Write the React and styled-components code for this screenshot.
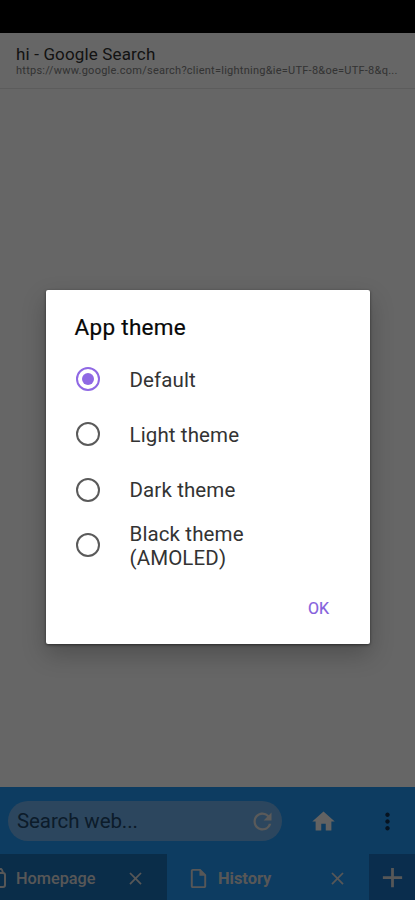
import React, { useState } from 'react'
import styled, { createGlobalStyle } from 'styled-components'
import { MdRefresh, MdHome, MdMoreVert, MdClose, MdAdd, MdOutlineInsertDriveFile } from 'react-icons/md'

const GlobalStyle = createGlobalStyle`
    body {
        margin: 0;
        background: #000;
        font-family: Roboto, sans-serif;
    }
    * {
        box-sizing: border-box;
    }
`
const Screen = styled.div`
    position: relative;
    display: flex;
    flex-direction: column;
    width: 415px;
    height: 900px;
    overflow: hidden;
    background: #fff;
`
const StatusBar = styled.div`
    height: 33px;
    background: #000;
`
const PageHeader = styled.header`
    height: 56px;
    padding: 11px 16px 0;
    border-bottom: 1px solid #e6e6e6;
    white-space: nowrap;
`
const PageTitle = styled.div`
    font-size: 17px;
    line-height: 20px;
    letter-spacing: .15px;
    color: #303030;
`
const PageUrl = styled.div`
    font-size: 11px;
    line-height: 13px;
    letter-spacing: .25px;
    color: #808080;
`
const Page = styled.main`
    flex: 1;
`
const Toolbar = styled.div`
    display: flex;
    align-items: center;
    height: 67px;
    padding: 1px 0 0 8px;
    background: #2196f3;
    color: #f4f4f4;
`
const SearchBox = styled.div`
    display: flex;
    flex: none;
    align-items: center;
    justify-content: space-between;
    width: 274px;
    height: 40px;
    padding: 0 6px 0 9px;
    border-radius: 20px;
    background: #6eb0ea;
    color: #e0e0e0;
`
const Placeholder = styled.span`
    font-size: 20.5px;
    letter-spacing: -.1px;
    color: #20466a;
`
const IconButton = styled.span`
    display: flex;
    flex: none;
    justify-content: center;
    width: ${props => props.width};
    color: ${props => props.color || 'inherit'};
`
const Tabs = styled.div`
    display: flex;
    height: 46px;
    background: #1a70b6;
    color: #dadada;
`
const Tab = styled.div`
    display: flex;
    align-items: center;
    flex: none;
    width: ${props => props.width};
    padding-left: ${props => props.pad || 0};
    padding-top: 2px;
    background: ${props => props.active ? '#2196f3' : '#1a70b6'};
    font-weight: ${props => props.active ? 700 : 500};
    overflow: hidden;
    svg {
        flex: none;
    }
`
const TabLabel = styled.span`
    width: 109px;
    margin-left: ${props => props.left};
    font-size: ${props => props.size};
`
const ClippedIcon = styled.span`
    display: flex;
    justify-content: flex-end;
    width: 7px;
    overflow: hidden;
`
const AddTab = styled.div`
    display: flex;
    align-items: center;
    justify-content: center;
    flex: 1;
    padding-top: 1px;
    background: #1a70c0;
`
const Scrim = styled.div`
    position: absolute;
    inset: 0;
    padding: 289.5px 0 0 46px;
    background: rgba(0, 0, 0, .6);
`
const Dialog = styled.section`
    display: flex;
    flex-direction: column;
    width: 323.5px;
    height: 354px;
    padding: 24px 28.5px 0;
    border-radius: 2px;
    background: #fff;
    box-shadow: 0 1px 3px rgba(0, 0, 0, .5), 0 10px 24px rgba(0, 0, 0, .24);
`
const DialogTitle = styled.h2`
    margin: 0 0 10.7px;
    font-size: 22.5px;
    font-weight: 400;
    line-height: 27px;
    letter-spacing: .3px;
    color: #080808;
    -webkit-text-stroke: .2px #080808;
`
const Option = styled.div`
    display: flex;
    align-items: center;
    height: 55.4px;
    color: #333;
    font-size: 20.5px;
    line-height: 24.5px;
    letter-spacing: .12px;
`
const OptionText = styled.span`
    width: 150px;
    margin-left: 30px;
    padding-top: 2px;
`
const Radio = styled.span`
    display: flex;
    align-items: center;
    justify-content: center;
    width: 24px;
    height: 24px;
    margin-left: 1px;
    border: 2px solid ${props => props.checked ? '#8f68e4' : '#5a5a5a'};
    border-radius: 50%;
    &::after {
        width: 12px;
        height: 12px;
        border-radius: 50%;
        background: ${props => props.checked ? '#8f68e4' : 'transparent'};
        content: '';
    }
`
const OkButton = styled.button`
    align-self: flex-end;
    margin: 26.5px 12px 0 0;
    padding: 0;
    border: 0;
    background: none;
    color: #8560dc;
    font: 400 16px/20px Roboto, sans-serif;
    -webkit-text-stroke: .2px #8560dc;
`

const BagIcon = () => (
    <svg width="20" height="24" viewBox="0 0 20 24" fill="none" stroke="currentColor" strokeWidth="2">
        <path d="M2 7h14q2 0 2 2v10q0 2-2 2H4q-2 0-2-2zM6 7V4q0-1 1-1h7q1 0 2 4" />
    </svg>
)

const themes = ['Default', 'Light theme', 'Dark theme', 'Black theme (AMOLED)']

const App = () => {
    const [selected, setSelected] = useState('Default')

    return (
        <Screen>
            <GlobalStyle />
            <StatusBar />
            <PageHeader>
                <PageTitle>hi - Google Search</PageTitle>
                <PageUrl>https://www.google.com/search?client=lightning&amp;ie=UTF-8&amp;oe=UTF-8&amp;q...</PageUrl>
            </PageHeader>
            <Page />
            <Toolbar>
                <SearchBox>
                    <Placeholder>Search web...</Placeholder>
                    <MdRefresh size={27} />
                </SearchBox>
                <IconButton width="82px"><MdHome size={27} /></IconButton>
                <IconButton width="47px" color="#103050"><MdMoreVert size={27} /></IconButton>
            </Toolbar>
            <Tabs>
                <Tab width="167px">
                    <ClippedIcon><BagIcon /></ClippedIcon>
                    <TabLabel left="9px" size="16.3px">Homepage</TabLabel>
                    <MdClose size={21} />
                </Tab>
                <Tab active width="202px" pad="20px">
                    <MdOutlineInsertDriveFile size={23} />
                    <TabLabel left="8px" size="16.4px">History</TabLabel>
                    <MdClose size={21} />
                </Tab>
                <AddTab><MdAdd size={33} /></AddTab>
            </Tabs>
            <Scrim>
                <Dialog>
                    <DialogTitle>App theme</DialogTitle>
                    {themes.map(theme => (
                        <Option key={theme} onClick={() => setSelected(theme)}>
                            <Radio checked={theme === selected} />
                            <OptionText>{theme}</OptionText>
                        </Option>
                    ))}
                    <OkButton>OK</OkButton>
                </Dialog>
            </Scrim>
        </Screen>
    )
}

export default App
